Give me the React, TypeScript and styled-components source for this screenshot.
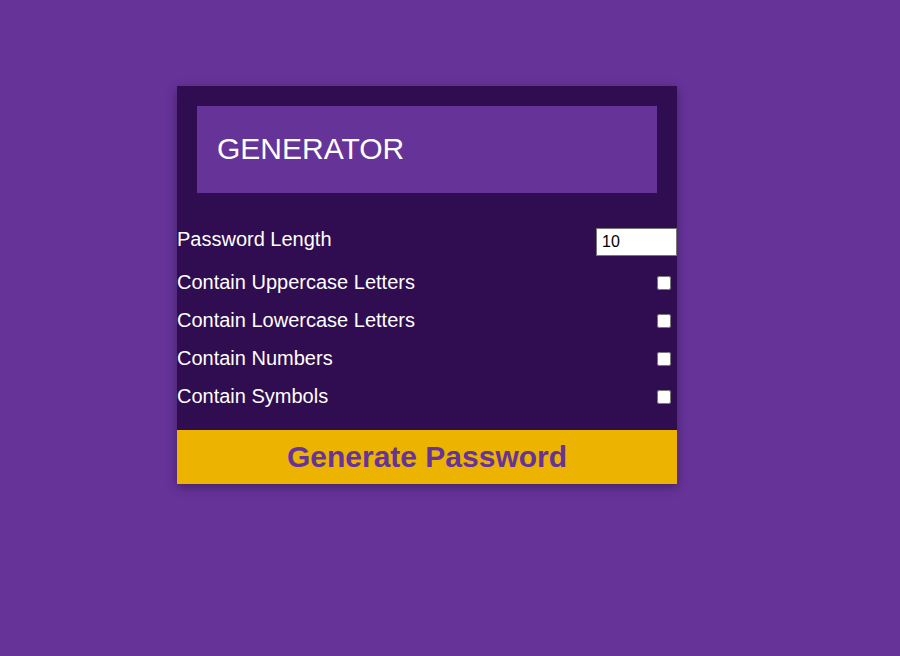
import React from "react";
import styled, { createGlobalStyle } from "styled-components";

const GlobalStyle = createGlobalStyle`
  html, body {
    margin: 0;
    padding: 0;
    background: #663399;
    font-family: "Liberation Sans", Arial, sans-serif;
  }
`;

const Page = styled.div`
  min-height: 656px;
  padding: 86px 0 0 177px;
  box-sizing: border-box;
`;

const Card = styled.div`
  width: 500px;
  background: #300d50;
  box-shadow: 0 3px 10px rgba(0, 0, 0, 0.35);
  padding-top: 20px;
  box-sizing: border-box;
`;

const Header = styled.div`
  margin: 0 20px;
  height: 87px;
  background: #663399;
  display: flex;
  align-items: center;
  padding: 0 20px 2px;
  box-sizing: border-box;
`;

const Title = styled.h2`
  margin: 0;
  color: #ffffff;
  font-size: 30px;
  font-weight: 400;
  line-height: 34px;
`;

const Settings = styled.div`
  display: flex;
  flex-direction: column;
  gap: 15px;
  padding: 34px 0 22px;
`;

const Row = styled.div<{ $top?: boolean }>`
  display: flex;
  justify-content: space-between;
  align-items: ${(p) => (p.$top ? "flex-start" : "center")};
`;

const Label = styled.label<{ $shift?: boolean }>`
  color: #ffffff;
  font-size: 20px;
  line-height: 23px;
  margin-top: ${(p) => (p.$shift ? "1px" : "0")};
`;

const NumberInput = styled.input`
  width: 81px;
  height: 28px;
  margin-top: 1px;
  box-sizing: border-box;
  border: 1px solid #767676;
  background: #ffffff;
  font-family: "Liberation Sans", Arial, sans-serif;
  font-size: 16px;
  padding: 0 5px;
  color: #000;
  outline: none;
`;

const Check = styled.input`
  width: 14px;
  height: 14px;
  margin: 1px 6px 0 0;
`;

const GenerateButton = styled.button`
  display: block;
  width: 100%;
  height: 54px;
  border: none;
  background: #ecb300;
  color: #663399;
  font-family: "Liberation Sans", Arial, sans-serif;
  font-size: 30px;
  font-weight: 700;
  cursor: pointer;
  padding: 0;
`;

const options = [
  "Contain Uppercase Letters",
  "Contain Lowercase Letters",
  "Contain Numbers",
  "Contain Symbols",
];

export default function App() {
  return (
    <>
      <GlobalStyle />
      <Page>
        <Card>
          <Header>
            <Title>GENERATOR</Title>
          </Header>
          <Settings>
            <Row $top>
              <Label $shift>Password Length</Label>
              <NumberInput type="number" defaultValue={10} />
            </Row>
            {options.map((o) => (
              <Row key={o}>
                <Label>{o}</Label>
                <Check type="checkbox" />
              </Row>
            ))}
          </Settings>
          <GenerateButton>Generate Password</GenerateButton>
        </Card>
      </Page>
    </>
  );
}
